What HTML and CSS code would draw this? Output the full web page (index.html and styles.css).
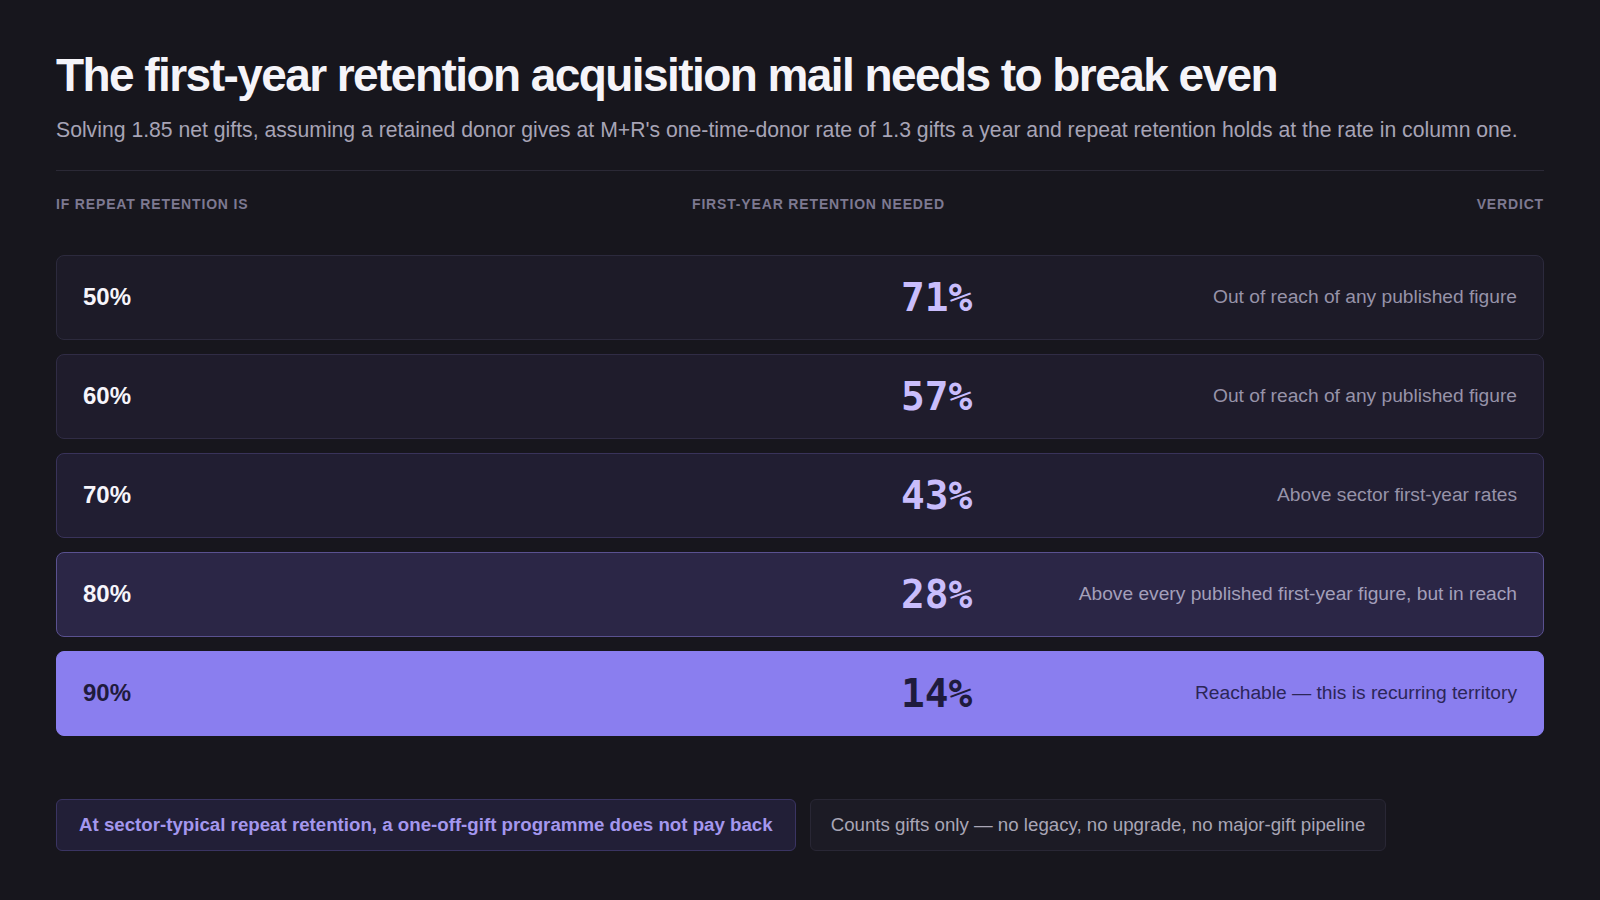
FILE: index.html
```html
<!DOCTYPE html>
<html lang="en">
<head>
    <meta charset="UTF-8">
    <meta name="viewport" content="width=device-width, initial-scale=1.0">
    <title>First-year retention to break even</title>
    <link rel="stylesheet" href="styles.css">
</head>
<body>
    <div class="page">
        <h1>The first-year retention acquisition mail needs to break even</h1>
        <p class="subtitle">Solving 1.85 net gifts, assuming a retained donor gives at M+R's one-time-donor rate of 1.3 gifts a year and repeat retention holds at the rate in column one.</p>

        <div class="columns">
            <span>If repeat retention is</span>
            <span>First-year retention needed</span>
            <span class="right">Verdict</span>
        </div>

        <div class="rows">
            <div class="row tint-1">
                <div class="repeat">50%</div>
                <div class="needed">71%</div>
                <div class="verdict">Out of reach of any published figure</div>
            </div>
            <div class="row tint-2">
                <div class="repeat">60%</div>
                <div class="needed">57%</div>
                <div class="verdict">Out of reach of any published figure</div>
            </div>
            <div class="row tint-3">
                <div class="repeat">70%</div>
                <div class="needed">43%</div>
                <div class="verdict">Above sector first-year rates</div>
            </div>
            <div class="row tint-4">
                <div class="repeat">80%</div>
                <div class="needed">28%</div>
                <div class="verdict">Above every published first-year figure, but in reach</div>
            </div>
            <div class="row reachable">
                <div class="repeat">90%</div>
                <div class="needed">14%</div>
                <div class="verdict">Reachable — this is recurring territory</div>
            </div>
        </div>

        <div class="notes">
            <div class="note key">At sector-typical repeat retention, a one-off-gift programme does not pay back</div>
            <div class="note">Counts gifts only — no legacy, no upgrade, no major-gift pipeline</div>
        </div>
    </div>
</body>
</html>
```

FILE: styles.css
```css
body {
    margin: 0;
    background-color: #17161d;
    color: #f3f2f7;
    font-family: "Liberation Sans", Arial, sans-serif;
}
.page {
    padding: 49px 56px 0;
}
h1 {
    margin: 0;
    font-size: 46px;
    line-height: 1.15;
    font-weight: bold;
    letter-spacing: -0.034em;
    color: #f5f4f9;
}
.subtitle {
    margin: 13px 0 0;
    font-size: 21.2px;
    line-height: 1.4;
    color: #a7a4b6;
    padding-bottom: 25px;
    border-bottom: 1px solid #2b2936;
}
.columns {
    display: grid;
    grid-template-columns: 636px 1fr auto;
    margin-top: 25px;
    font-size: 14px;
    line-height: 17px;
    font-weight: bold;
    text-transform: uppercase;
    letter-spacing: 0.06em;
    color: #7d7991;
}
.columns .right {
    text-align: right;
}
.rows {
    display: flex;
    flex-direction: column;
    gap: 14px;
    margin-top: 42px;
}
.row {
    display: grid;
    grid-template-columns: 818px auto 1fr;
    align-items: center;
    height: 85px;
    box-sizing: border-box;
    padding: 0 26px;
    border: 1px solid #2c2a3d;
    border-radius: 8px;
    background-color: #1d1b28;
}
.repeat {
    font-size: 24px;
    font-weight: bold;
    color: #f6f5fb;
}
.needed {
    font-family: "DejaVu Sans Mono", monospace;
    font-size: 39.5px;
    font-weight: bold;
    color: #c9bdfc;
}
.verdict {
    text-align: right;
    font-size: 19.2px;
    color: #9793a9;
}
.tint-2 {
    background-color: #1f1c2c;
    border-color: #302c45;
}
.tint-3 {
    background-color: #211e32;
    border-color: #39335a;
}
.tint-4 {
    background-color: #2b2646;
    border-color: #5a5190;
}
.tint-4 .verdict {
    color: #a39fba;
}
.reachable {
    background-color: #8a7eef;
    border-color: #8a7eef;
}
.reachable .repeat,
.reachable .needed {
    color: #1f1b3d;
}
.reachable .verdict {
    color: #2c2657;
}
.notes {
    display: flex;
    gap: 14px;
    margin-top: 63px;
}
.note {
    height: 52px;
    box-sizing: border-box;
    display: flex;
    align-items: center;
    padding: 0 20px;
    border: 1px solid #292735;
    border-radius: 6px;
    background-color: #1c1b25;
    font-size: 18.7px;
    color: #a9a6b6;
}
.note.key {
    padding: 0 22px;
    background-color: #221f37;
    border-color: #3a3462;
    color: #a497ee;
    font-weight: bold;
}
```
